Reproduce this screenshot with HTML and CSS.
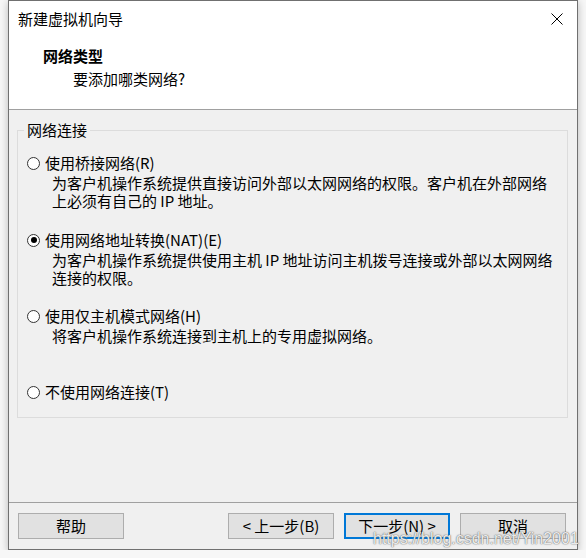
FILE: index.html
```html
<!DOCTYPE html>
<html lang="zh-CN">
<head>
	<meta charset="UTF-8">
	<title>新建虚拟机向导</title>
	<link rel="stylesheet" href="styles.css">
</head>
<body>
	<div class="window">
		<div class="titlebar">
			<span class="title">新建虚拟机向导</span>
			<svg class="close" width="12" height="12" viewBox="0 0 12 12">
				<path d="M0.5 0.5 L11.5 11.5 M11.5 0.5 L0.5 11.5" stroke="#000" stroke-width="1" fill="none"/>
			</svg>
		</div>
		<div class="header">
			<h1>网络类型</h1>
			<p>要添加哪类网络?</p>
		</div>
		<div class="content">
			<fieldset class="group">
				<legend>网络连接</legend>
				<div class="option first">
					<div class="radio-row"><span class="radio"></span>使用桥接网络(R)</div>
					<div class="desc">为客户机操作系统提供直接访问外部以太网网络的权限。客户机在外部网络<br>上必须有自己的 IP 地址。</div>
				</div>
				<div class="option second">
					<div class="radio-row"><span class="radio checked"></span>使用网络地址转换(NAT)(E)</div>
					<div class="desc">为客户机操作系统提供使用主机 IP 地址访问主机拨号连接或外部以太网网络<br>连接的权限。</div>
				</div>
				<div class="option third">
					<div class="radio-row"><span class="radio"></span>使用仅主机模式网络(H)</div>
					<div class="desc">将客户机操作系统连接到主机上的专用虚拟网络。</div>
				</div>
				<div class="option fourth">
					<div class="radio-row"><span class="radio"></span>不使用网络连接(T)</div>
				</div>
			</fieldset>
		</div>
		<div class="footer">
			<button class="btn">帮助</button>
			<span class="spacer"></span>
			<button class="btn">&lt; 上一步(B)</button>
			<button class="btn default">下一步(N) &gt;</button>
			<button class="btn">取消</button>
		</div>
	</div>
	<div class="watermark">https://blog.csdn.net/Yin2001</div>
</body>
</html>
```

FILE: styles.css
```css
body {
	margin: 0;
	background-color: #f7f7f7;
	font-family: "Noto Sans CJK SC", "Liberation Sans", sans-serif;
	font-size: 15px;
	color: #000;
}

.window {
	display: flex;
	flex-direction: column;
	box-sizing: border-box;
	width: 570px;
	height: 550px;
	margin-left: 8px;
	border: 1px solid #707070;
	background-color: #f0f0f0;
	box-shadow: 0 2px 8px rgba(0, 0, 0, 0.25);
}

.titlebar {
	display: flex;
	height: 35px;
	padding: 0 14px 0 9px;
	align-items: center;
	justify-content: space-between;
	background-color: #fff;
	line-height: 20px;
}

.close {
	display: block;
	margin-top: 1px;
}

.header {
	height: 73px;
	box-sizing: content-box;
	padding-left: 34px;
	background-color: #fff;
	border-bottom: 1px solid #a0a0a0;
}

.header h1 {
	margin: 0;
	padding-top: 10px;
	font-size: 15px;
	font-weight: bold;
	line-height: 20px;
}

.header p {
	margin: 3px 0 0 30px;
	line-height: 20px;
}

.content {
	flex: 1;
	padding: 10px 9px 0 8px;
}

.group {
	margin: 0;
	padding: 0 6px 16px 6px;
	border: 1px solid #dcdcdc;
}

.group legend {
	padding: 0 3px;
	line-height: 20px;
}

.option {
	margin-left: 3px;
	line-height: 18px;
	white-space: nowrap;
}

.option.first {
	margin-top: 14px;
}

.option.second {
	margin-top: 21px;
}

.option.third {
	margin-top: 20px;
}

.option.fourth {
	margin-top: 38px;
}

.radio-row {
	display: flex;
	align-items: center;
}

.radio {
	position: relative;
	box-sizing: border-box;
	width: 13px;
	height: 13px;
	margin-right: 5px;
	border: 1px solid #333;
	border-radius: 50%;
	background-color: #fff;
}

.radio.checked::after {
	content: "";
	position: absolute;
	left: 2.5px;
	top: 2.5px;
	width: 6px;
	height: 6px;
	border-radius: 50%;
	background-color: #000;
}

.desc {
	margin: 2px 0 0 25px;
}

.footer {
	display: flex;
	height: 26px;
	padding: 10px 11px 10px 9px;
	border-top: 1px solid #a0a0a0;
}

.spacer {
	flex: 1;
}

.btn {
	box-sizing: border-box;
	width: 106px;
	height: 26px;
	margin: 0 0 0 10px;
	padding: 0;
	border: 1px solid #adadad;
	background-color: #e1e1e1;
	font-family: "Noto Sans CJK SC", "Liberation Sans", sans-serif;
	font-size: 15px;
	line-height: 22px;
	color: #000;
}

.btn:first-child {
	margin-left: 0;
}

.btn.default {
	border: 2px solid #0078d7;
}

.watermark {
	position: absolute;
	left: 373px;
	top: 530px;
	font-family: "Liberation Sans", sans-serif;
	font-size: 16px;
	color: rgba(255, 255, 255, 0.9);
	text-shadow: 0 0 1px rgba(60, 60, 60, 0.9), 0 0 2px rgba(120, 120, 120, 0.6);
}
```
